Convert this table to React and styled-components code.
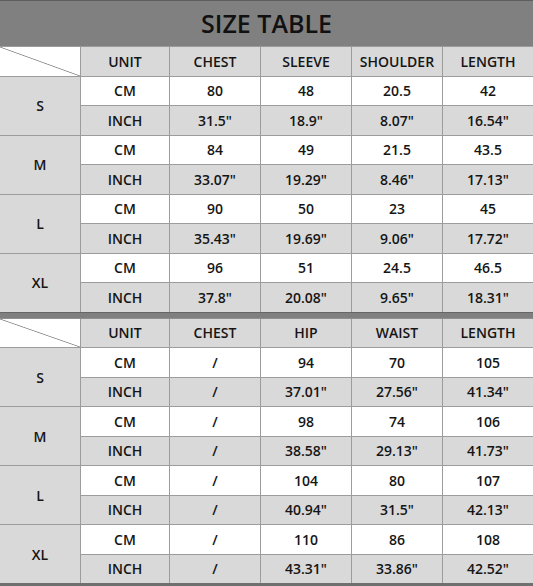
import React from "react";
import styled, { createGlobalStyle } from "styled-components";

const Global = createGlobalStyle`
  html, body { margin: 0; padding: 0; background: #fff; }
  body { font-family: "Open Sans", "Noto Sans", Arial, sans-serif; }
`;

const Page = styled.div`
  width: 533px;
  height: 586px;
  display: flex;
  flex-direction: column;
  overflow: hidden;
  background: #fff;
`;

const TitleBar = styled.div`
  height: 46px;
  box-sizing: border-box;
  border-top: 1px solid #5e5e5e;
  background: #808080;
  display: flex;
  align-items: center;
  justify-content: center;
  font-size: 25px;
  font-weight: 600;
  color: #111;
  padding-bottom: 1px;
`;

const Grid = styled.div`
  display: grid;
  grid-template-columns: 80px 88px 90px 90px 90px 90px;
  grid-template-rows: repeat(9, 28.5px);
  gap: 1px;
  background: #9c9c9c;
  padding-top: ${(p) => (p.$top ? "1px" : "0")};
`;

const Cell = styled.div`
  background: ${(p) => (p.$gray ? "#d9d9d9" : "#ffffff")};
  display: flex;
  align-items: center;
  justify-content: center;
  font-size: 14px;
  font-weight: 600;
  color: #151515;
  grid-row: ${(p) => (p.$span ? `span ${p.$span}` : "auto")};
`;

const Corner = styled.div`
  background: linear-gradient(
    to top right,
    #ffffff calc(50% - 0.8px),
    #8a8a8a 50%,
    #ffffff calc(50% + 0.8px)
  );
`;

const Separator = styled.div`
  height: 7px;
  box-sizing: border-box;
  background: #7f7f7f;
  border-top: 1px solid #666;
  border-bottom: 1px solid #8f8f8f;
`;

const BottomEdge = styled.div`
  flex: 1;
  background: #6f6f6f;
`;

const top = {
  headers: ["UNIT", "CHEST", "SLEEVE", "SHOULDER", "LENGTH"],
  rows: [
    ["S", ["80", "48", "20.5", "42"], ['31.5"', '18.9"', '8.07"', '16.54"']],
    ["M", ["84", "49", "21.5", "43.5"], ['33.07"', '19.29"', '8.46"', '17.13"']],
    ["L", ["90", "50", "23", "45"], ['35.43"', '19.69"', '9.06"', '17.72"']],
    ["XL", ["96", "51", "24.5", "46.5"], ['37.8"', '20.08"', '9.65"', '18.31"']],
  ],
};

const bottom = {
  headers: ["UNIT", "CHEST", "HIP", "WAIST", "LENGTH"],
  rows: [
    ["S", ["/", "94", "70", "105"], ["/", '37.01"', '27.56"', '41.34"']],
    ["M", ["/", "98", "74", "106"], ["/", '38.58"', '29.13"', '41.73"']],
    ["L", ["/", "104", "80", "107"], ["/", '40.94"', '31.5"', '42.13"']],
    ["XL", ["/", "110", "86", "108"], ["/", '43.31"', '33.86"', '42.52"']],
  ],
};

function SizeGrid({ data, isTop }) {
  return (
    <Grid $top={isTop}>
      <Corner />
      {data.headers.map((h) => (
        <Cell key={h} $gray>
          {h}
        </Cell>
      ))}
      {data.rows.map(([size, cm, inch]) => (
        <React.Fragment key={size}>
          <Cell $gray $span={2}>
            {size}
          </Cell>
          <Cell>CM</Cell>
          {cm.map((v, i) => (
            <Cell key={"c" + i}>{v}</Cell>
          ))}
          <Cell $gray>INCH</Cell>
          {inch.map((v, i) => (
            <Cell key={"i" + i} $gray>
              {v}
            </Cell>
          ))}
        </React.Fragment>
      ))}
    </Grid>
  );
}

export default function App() {
  return (
    <>
      <Global />
      <Page>
        <TitleBar>SIZE TABLE</TitleBar>
        <SizeGrid data={top} isTop />
        <Separator />
        <SizeGrid data={bottom} />
        <BottomEdge />
      </Page>
    </>
  );
}
